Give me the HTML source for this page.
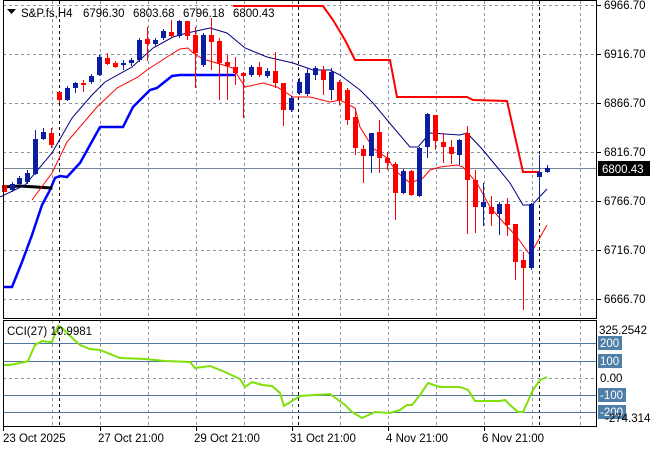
<!DOCTYPE html>
<html><head><meta charset="utf-8"><style>
html,body{margin:0;padding:0;background:#fff;}
svg{display:block;font-family:"Liberation Sans",sans-serif;font-size:11.5px;}
</style></head><body>
<svg width="660" height="450" viewBox="0 0 660 450" xmlns="http://www.w3.org/2000/svg">
<rect width="660" height="450" fill="#fff"/>
<g stroke="#8a94a0" stroke-width="1" stroke-dasharray="3,3" fill="none">
<path d="M3 5.5H597M3 54.5H597M3 103.5H597M3 152.5H597M3 201.5H597M3 250.5H597M3 299.5H597"/>
<path d="M52.5 1V318M100.5 1V318M148.5 1V318M196.5 1V318M244.5 1V318M292.5 1V318M340.5 1V318M388.5 1V318M436.5 1V318M484.5 1V318M532.5 1V318M580.5 1V318"/>
<path d="M52.5 320V426M100.5 320V426M148.5 320V426M196.5 320V426M244.5 320V426M292.5 320V426M340.5 320V426M388.5 320V426M436.5 320V426M484.5 320V426M532.5 320V426M580.5 320V426"/>
<path d="M3 378.5H597"/>
</g>
<g stroke="#000" stroke-width="1" stroke-dasharray="3,3">
<path d="M59.5 1V318M298.5 1V318M539.5 1V318M59.5 320V426M298.5 320V426M539.5 320V426"/>
</g>
<path d="M3 168.5H597" stroke="#7a8796" stroke-width="1"/>
<g stroke="#4f78a0" stroke-width="1"><path d="M3 343.5H597M3 361.5H597M3 395.5H597M3 412.5H597"/></g>
<polyline fill="none" stroke="#0000ff" stroke-width="2.5" points="3,287 12,287 22,262 32,235 42,205 50,190 55,178 60,176 67,177 80,163 100,127 123,127 133,107 150,90 157,88 172,76 180,75 235,75"/>
<polyline fill="none" stroke="#ff0000" stroke-width="2" points="233,6 323,6 333,20 345,40 355,60 390,60 397,97 467,97 473,100 507,101 523,172 540,172"/>
<polyline fill="none" stroke="#000" stroke-width="3" points="3,187 20,186 52,188"/>
<polyline fill="none" stroke="#000080" stroke-width="1" points="0,197 25,185 52,153 72,118 92,95 105,82 132,67 153,48 173,37 187,33 210,28 227,33 245,48 267,57 293,63 313,70 330,70 340,75 360,90 373,103 393,127 410,147 418,147 430,133 460,135 467,133 483,150 497,167 510,183 523,205 532,205 547,189"/>
<polyline fill="none" stroke="#ff0000" stroke-width="1" points="32,200 52,173 67,142 97,107 117,88 138,77 147,70 167,57 180,49 188,48 193,53 203,59 213,62 233,68 245,87 263,83 277,87 293,97 310,97 330,102 340,100 355,108 360,127 373,148 387,158 397,172 410,183 423,178 430,170 440,167 457,165 463,167 477,183 490,207 503,222 517,237 530,255 547,225"/>
<path stroke="#ff0000" stroke-width="1" fill="none" d="M4.5 185V192M51.5 128V148M59.5 92V103M83.5 80V92M107.5 53V65M115.5 61V68M147.5 27V61M171.5 20V38M187.5 21V40M195.5 27V88M211.5 18V70M219.5 38V100M227.5 55V100M235.5 57V85M243.5 72V118M259.5 62V77M275.5 52V88M283.5 83V126M323.5 66V95M339.5 80V105M347.5 88V125M355.5 108V155M363.5 145V183M379.5 120V173M387.5 152V170M395.5 162V220M411.5 170V196M435.5 115V150M443.5 133V163M451.5 140V164M467.5 126V234M475.5 170V233M491.5 196V226M507.5 198V236M515.5 224V280M523.5 252V310"/>
<path fill="#ff0000" d="M2 185h5v7h-5zM49 133h5v12h-5zM57 92h5v8h-5zM81 83h5v2h-5zM105 58h5v6h-5zM113 63h5v4h-5zM145 39h5v5h-5zM169 32h5v4h-5zM185 21h5v15h-5zM193 35h5v18h-5zM209 35h5v7h-5zM217 41h5v22h-5zM225 62h5v4h-5zM233 67h5v6h-5zM241 73h5v3h-5zM257 67h5v8h-5zM273 71h5v12h-5zM281 83h5v27h-5zM321 70h5v10h-5zM337 82h5v18h-5zM345 90h5v30h-5zM353 117h5v31h-5zM361 149h5v7h-5zM377 132h5v26h-5zM385 158h5v5h-5zM393 164h5v29h-5zM409 171h5v24h-5zM433 115h5v26h-5zM441 142h5v5h-5zM449 147h5v7h-5zM465 133h5v47h-5zM473 180h5v27h-5zM489 207h5v7h-5zM505 204h5v21h-5zM513 224h5v38h-5zM521 260h5v8h-5z"/>
<path stroke="#0c1ea0" stroke-width="1" fill="none" d="M12.5 182V192M19.5 176V186M27.5 170V184M35.5 130V175M43.5 128V140M67.5 86V101M75.5 82V93M91.5 74V84M99.5 55V76M123.5 60V70M131.5 58V66M139.5 38V62M155.5 38V46M163.5 29V40M179.5 20V38M203.5 33V67M251.5 65V77M267.5 68V78M291.5 96V112M299.5 78V95M307.5 68V96M315.5 66V80M331.5 68V100M371.5 133V173M403.5 169V194M419.5 147V197M427.5 113V158M459.5 139V165M483.5 183V226M499.5 202V235M531.5 203V270M539.5 155V200M547.5 165V173"/>
<path fill="#0c1ea0" d="M10 184h5v6h-5zM17 178h5v6h-5zM25 173h5v9h-5zM33 139h5v35h-5zM41 132h5v7h-5zM65 88h5v12h-5zM73 83h5v5h-5zM89 76h5v6h-5zM97 57h5v18h-5zM121 63h5v2h-5zM129 60h5v3h-5zM137 40h5v20h-5zM153 40h5v4h-5zM161 31h5v7h-5zM177 21h5v15h-5zM201 35h5v30h-5zM249 67h5v8h-5zM265 71h5v5h-5zM289 98h5v12h-5zM297 82h5v11h-5zM305 73h5v21h-5zM313 68h5v7h-5zM329 72h5v18h-5zM369 133h5v23h-5zM401 171h5v22h-5zM417 148h5v48h-5zM425 114h5v33h-5zM457 140h5v15h-5zM481 202h5v5h-5zM497 204h5v10h-5zM529 204h5v64h-5zM537 172h5v5h-5zM545 168h5v4h-5z"/>
<polyline fill="none" stroke="#7fe00a" stroke-width="2" points="3,365 10,365 25,362 28,361 35,345 42,341 50,342 52,342 58,326 62,328 68,334 80,345 90,349 100,350 120,358 145,359 165,361 190,362 195,368 210,366 225,372 240,379 245,387 252,382 262,385 272,386 280,393 284,406 300,396 330,394 345,405 352,412 362,418 375,412 390,413 400,410 407,405 412,405 420,395 428,383 440,387 460,387 468,390 475,401 500,401 505,400 510,405 518,412 523,412 533,390 540,380 547,377"/>
<g fill="none" stroke="#000" stroke-width="1">
<rect x="3.5" y="0.5" width="593" height="318"/>
<rect x="3.5" y="320.5" width="593" height="106"/>
</g>
<g stroke="#000"><path d="M597 5.5h4M597 54.5h4M597 103.5h4M597 152.5h4M597 201.5h4M597 250.5h4M597 299.5h4M3.5 427v4M100.5 427v4M196.5 427v4M292.5 427v4M388.5 427v4M484.5 427v4"/></g>
<path d="M7 9h9l-4.5 5z" fill="#000"/>
<g fill="#000">
<text x="21" y="17">S&amp;P.fs,H4</text><text x="83" y="17">6796.30</text><text x="133" y="17">6803.68</text><text x="183" y="17">6796.18</text><text x="233" y="17">6800.43</text>
</g>
<g fill="#000">
<text x="604" y="9">6966.70</text><text x="604" y="58">6916.70</text><text x="604" y="107">6866.70</text>
<text x="604" y="156">6816.70</text><text x="604" y="205">6766.70</text><text x="604" y="254">6716.70</text><text x="604" y="303">6666.70</text>
</g>
<rect x="598" y="161" width="52" height="15" fill="#000"/>
<text x="602" y="173" fill="#fff">6800.43</text>
<text x="7" y="335" fill="#000">CCI(27) 10.9981</text>
<text x="599" y="334" fill="#000">325.2542</text>
<rect x="598" y="336" width="24" height="14" fill="#4f7fa8"/><text x="600" y="347" fill="#fff">200</text>
<rect x="598" y="354" width="24" height="14" fill="#4f7fa8"/><text x="600" y="365" fill="#fff">100</text>
<text x="600" y="382" fill="#000">0.00</text>
<rect x="598" y="388" width="28" height="14" fill="#4f7fa8"/><text x="600" y="399" fill="#fff">-100</text>
<rect x="598" y="405" width="28" height="14" fill="#4f7fa8"/><text x="600" y="416" fill="#fff">-200</text>
<text x="605" y="422" fill="#000">-274.314</text>
<g fill="#000">
<text x="3" y="442">23 Oct 2025</text><text x="98" y="442">27 Oct 21:00</text><text x="194" y="442">29 Oct 21:00</text>
<text x="290" y="442">31 Oct 21:00</text><text x="386" y="442">4 Nov 21:00</text><text x="482" y="442">6 Nov 21:00</text>
</g>
</svg>
</body></html>
